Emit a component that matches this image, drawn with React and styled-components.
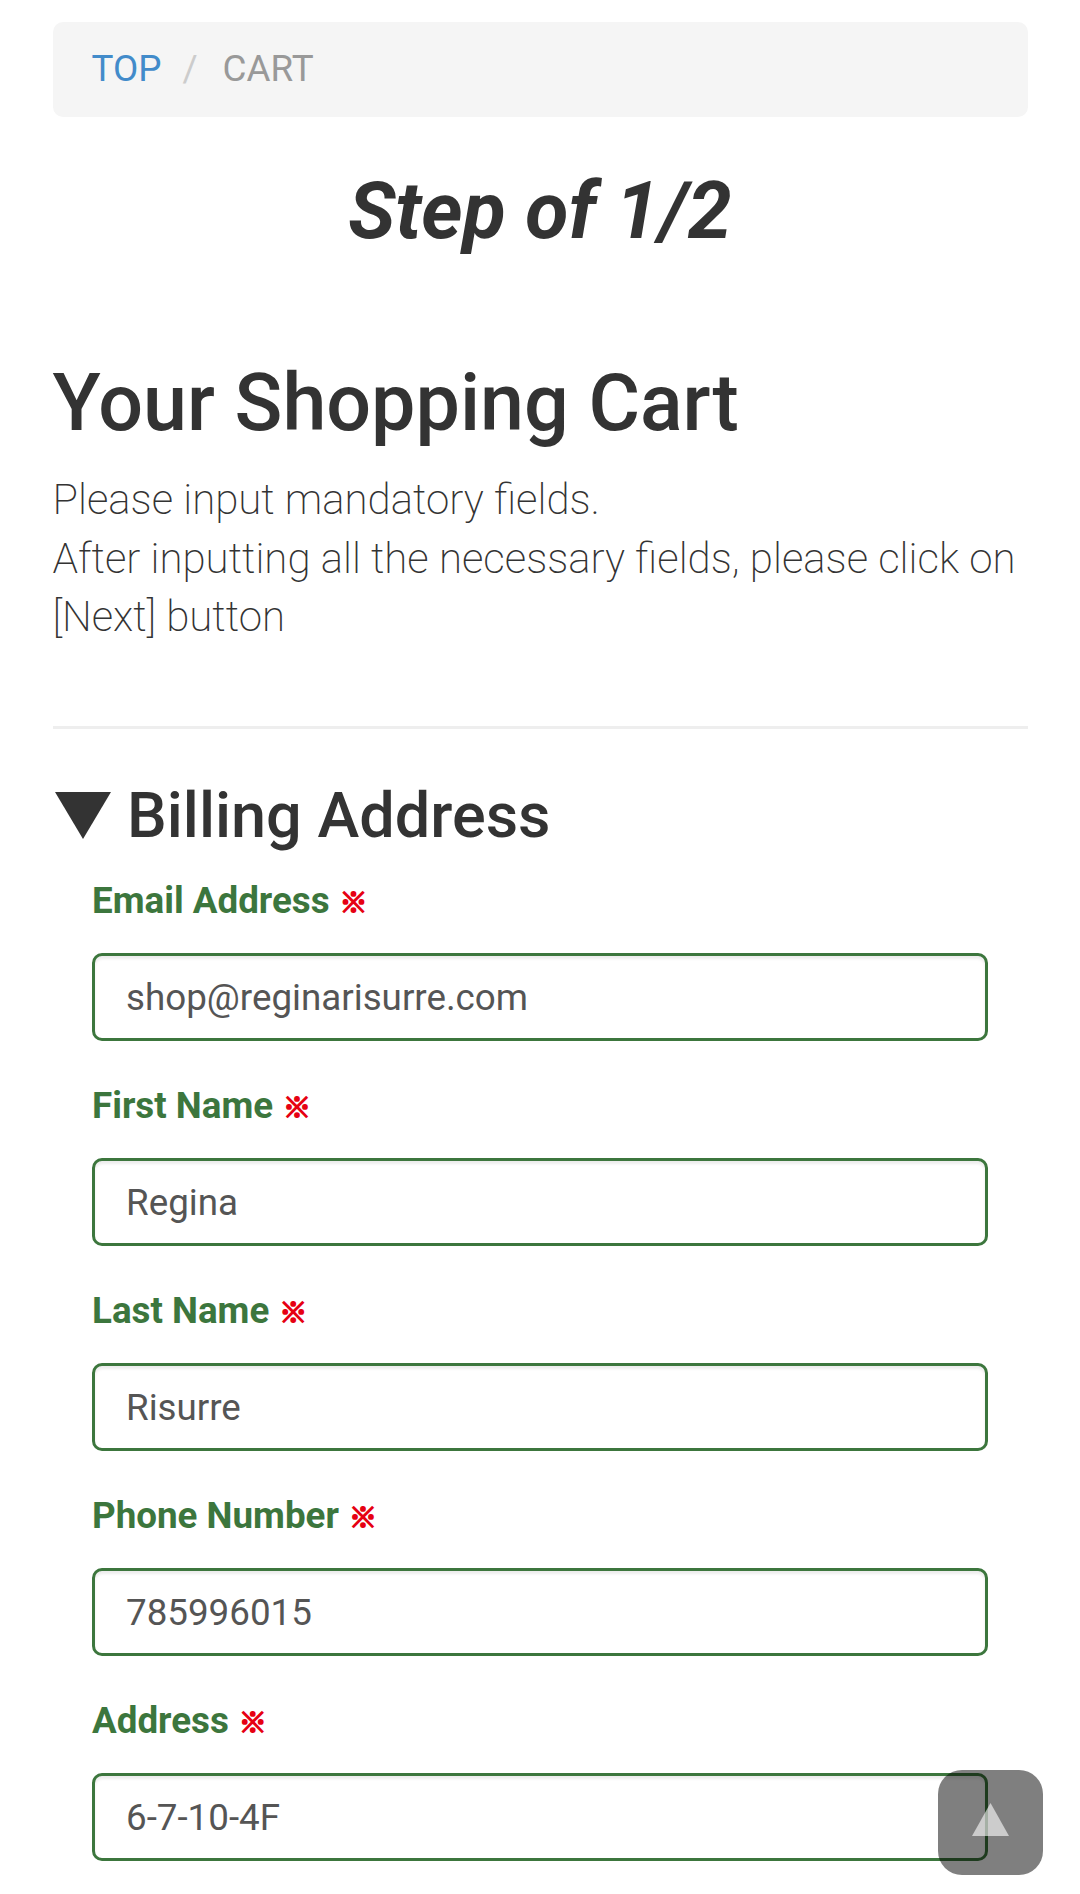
import React from 'react'
import styled, { createGlobalStyle } from 'styled-components'

const GlobalStyle = createGlobalStyle`
	html, body {
		margin: 0;
		padding: 0;
		background: #fff;
	}
	body {
		font-family: Roboto, 'Noto Sans', 'Liberation Sans', sans-serif;
		color: #333;
	}
	* {
		box-sizing: border-box;
	}
`

const Page = styled.div`
	padding: 22px 52.5px 40px;
`

const Breadcrumb = styled.ol`
	display: flex;
	align-items: center;
	list-style: none;
	margin: 0;
	padding: 21px 39px;
	background: #f5f5f5;
	border-radius: 10px;
	font-size: 36.75px;
	line-height: 52.5px;
`

const Crumb = styled.li`
	color: ${(p) => (p.$active ? '#999' : '#428bca')};
`

const Sep = styled.li`
	color: #ccc;
	margin: 0 25px 0 21px;
`

const StepTitle = styled.h2`
	margin: 51px 0 0;
	text-align: center;
	font-size: 79px;
	font-weight: 700;
	font-style: italic;
	line-height: 1.1;
	color: #333;
`

const Title = styled.h2`
	margin: 106px 0 0;
	font-size: 79px;
	font-weight: 500;
	line-height: 1.1;
	color: #333;
`

const Lead = styled.p`
	margin: 24px 0 0;
	font-size: 42px;
	font-weight: 200;
	line-height: 58.5px;
	color: #333;
`

const Rule = styled.hr`
	margin: 79px 0 0;
	border: 0;
	border-top: 3px solid #eee;
`

const SectionHead = styled.h3`
	display: flex;
	align-items: center;
	gap: 16px;
	margin: 52px 0 0;
	font-size: 63px;
	font-weight: 500;
	line-height: 1.1;
	color: #333;
`

const Arrow = styled.svg`
	flex: none;
	margin-left: 2.5px;
`

const Form = styled.div`
	padding: 25px 39.5px 0;
`

const Group = styled.div`
	margin-bottom: 39px;
`

const Label = styled.label`
	display: block;
	margin-bottom: 26px;
	font-size: 36.75px;
	font-weight: 700;
	line-height: 52px;
	color: #3c763d;
`

const Required = styled.span`
	margin-left: 10px;
	font-family: 'Noto Sans CJK JP', 'DejaVu Sans', sans-serif;
	font-size: 28px;
	font-weight: 700;
	line-height: 1;
	color: #e60012;
	-webkit-text-stroke: 1.6px #e60012;
`

const Input = styled.input`
	display: block;
	width: 100%;
	height: 88px;
	padding: 0 31px;
	border: 3px solid #3c763d;
	border-radius: 10px;
	box-shadow: inset 0 3px 3px rgba(0, 0, 0, 0.075);
	font-family: Roboto, 'Liberation Sans', sans-serif;
	font-size: 36.75px;
	color: #555;
	background: #fff;
	outline: none;
`

const ToTop = styled.button`
	position: fixed;
	right: 37px;
	bottom: 19px;
	width: 105px;
	height: 105px;
	display: flex;
	align-items: center;
	justify-content: center;
	padding: 0 0 6px;
	border: none;
	border-radius: 24px;
	background: rgba(0, 0, 0, 0.5);
	cursor: pointer;
`

const fields = [
	{ label: 'Email Address', value: 'shop@reginarisurre.com' },
	{ label: 'First Name', value: 'Regina' },
	{ label: 'Last Name', value: 'Risurre' },
	{ label: 'Phone Number', value: '785996015' },
	{ label: 'Address', value: '6-7-10-4F' },
]

const App = () => {
	return (
		<>
			<GlobalStyle />
			<Page>
				<Breadcrumb>
					<Crumb>TOP</Crumb>
					<Sep>/</Sep>
					<Crumb $active>CART</Crumb>
				</Breadcrumb>

				<StepTitle>Step of 1/2</StepTitle>

				<Title>Your Shopping Cart</Title>
				<Lead>
					Please input mandatory fields.
					<br />
					After inputting all the necessary fields, please click on [Next] button
				</Lead>

				<Rule />

				<SectionHead>
					<Arrow width='56' height='47' viewBox='0 0 56 47'>
						<polygon points='0,0 56,0 28,47' fill='#333' />
					</Arrow>
					Billing Address
				</SectionHead>

				<Form>
					{fields.map((f) => (
						<Group key={f.label}>
							<Label>
								{f.label}
								<Required>※</Required>
							</Label>
							<Input defaultValue={f.value} />
						</Group>
					))}
				</Form>
			</Page>

			<ToTop aria-label='Back to top'>
				<svg width='37' height='33' viewBox='0 0 37 33'>
					<polygon points='18.5,0 37,33 0,33' fill='rgba(255,255,255,0.6)' />
				</svg>
			</ToTop>
		</>
	)
}

export default App
